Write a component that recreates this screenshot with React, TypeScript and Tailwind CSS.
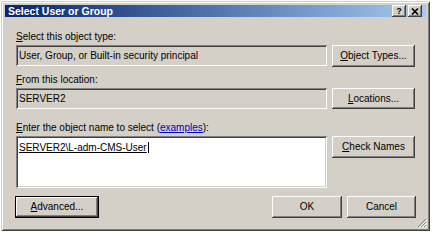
import React from "react";

const raised =
  "bg-[#d4d0c8] shadow-[inset_-1px_-1px_0_#404040,inset_1px_1px_0_#ffffff,inset_-2px_-2px_0_#808080,inset_2px_2px_0_#d4d0c8]";
const sunken =
  "shadow-[inset_1px_1px_0_#808080,inset_-1px_-1px_0_#ffffff,inset_2px_2px_0_#404040,inset_-2px_-2px_0_#d4d0c8]";

const Btn: React.FC<{ className?: string; children: React.ReactNode }> = ({
  className = "",
  children,
}) => (
  <button
    className={`${raised} flex items-center justify-center text-[10px] leading-none text-black ${className}`}
  >
    {children}
  </button>
);

const Key: React.FC<{ children: React.ReactNode }> = ({ children }) => (
  <span className="underline underline-offset-[1px]">{children}</span>
);

export default function App() {
  return (
    <div
      className="w-[433px] h-[235px] bg-white pl-[1px] pt-[1px]"
      style={{ fontFamily: '"Liberation Sans", Arial, sans-serif' }}
    >
      <div className="w-[429px] h-[230px] bg-[#d4d0c8] p-[4px] shadow-[inset_1px_1px_0_#d4d0c8,inset_-1px_-1px_0_#404040,inset_2px_2px_0_#ffffff,inset_-2px_-2px_0_#808080] flex flex-col">
        {/* Title bar */}
        <div className="h-[18px] flex items-center pl-[3px] pr-[4px] bg-gradient-to-r from-[#0a246a] to-[#a6caf0]">
          <span className="text-white font-bold text-[10.5px] leading-none">
            Select User or Group
          </span>
          <div className="ml-auto flex gap-[2px]">
            <div className={`${raised} w-[14px] h-[12px] flex items-center justify-center text-[9px] font-bold leading-none text-black`}>
              ?
            </div>
            <div className={`${raised} w-[14px] h-[12px] flex items-center justify-center`}>
              <svg width="8" height="7" viewBox="0 0 8 7">
                <path d="M1 0.5 L7 6.5 M7 0.5 L1 6.5" stroke="#000" strokeWidth="1.6" />
              </svg>
            </div>
          </div>
        </div>

        {/* Body */}
        <div className="flex flex-col pl-[11px] pr-[10px] text-[10px] text-black">
          <div className="mt-[14px] leading-[12px]">
            <Key>S</Key>elect this object type:
          </div>
          <div className="mt-[2px] flex gap-[5px]">
            <div className={`${sunken} w-[311px] h-[21px] flex items-center pl-[3px]`}>
              User, Group, or Built-in security principal
            </div>
            <Btn className="w-[83px] h-[22px]">
              <Key>O</Key>bject Types...
            </Btn>
          </div>

          <div className="mt-[7px] leading-[12px]">
            <Key>F</Key>rom this location:
          </div>
          <div className="mt-[2px] flex gap-[5px]">
            <div className={`${sunken} w-[311px] h-[21px] flex items-center pl-[3px]`}>
              SERVER2
            </div>
            <Btn className="w-[83px] h-[21px]">
              <Key>L</Key>ocations...
            </Btn>
          </div>

          <div className="mt-[13px] leading-[12px]">
            <Key>E</Key>nter the object name to select (
            <span className="text-[#0000cc] underline underline-offset-[1px]">examples</span>):
          </div>
          <div className="mt-[2px] flex gap-[5px] items-start">
            <div className={`${sunken} bg-white w-[311px] h-[52px] pl-[3px] pt-[4px]`}>
              <span className="inline-flex items-center leading-[11px]">
                <span className="underline underline-offset-[1px]">SERVER2\L-adm-CMS-User</span>
                <span className="w-[1px] h-[11px] bg-black ml-[1px]" />
              </span>
            </div>
            <Btn className="w-[83px] h-[22px]">
              <Key>C</Key>heck Names
            </Btn>
          </div>

          <div className="mt-[8px] flex items-center">
            <div className="w-[84px] h-[22px] border border-black -ml-[1px]">
              <Btn className="w-full h-full">
                <Key>A</Key>dvanced...
              </Btn>
            </div>
            <Btn className="ml-auto w-[70px] h-[22px]">OK</Btn>
            <Btn className="ml-[5px] w-[69px] h-[22px]">Cancel</Btn>
          </div>
        </div>

        {/* Resize grip */}
        <div className="mt-auto self-end -mr-[1px] -mb-[1px]">
          <svg width="10" height="10" viewBox="0 0 10 10">
            <path d="M9 1 L1 9 M9 4 L4 9 M9 7 L7 9" stroke="#808080" strokeWidth="1" />
            <path d="M10 2 L2 10 M10 5 L5 10 M10 8 L8 10" stroke="#ffffff" strokeWidth="1" />
          </svg>
        </div>
      </div>
    </div>
  );
}
